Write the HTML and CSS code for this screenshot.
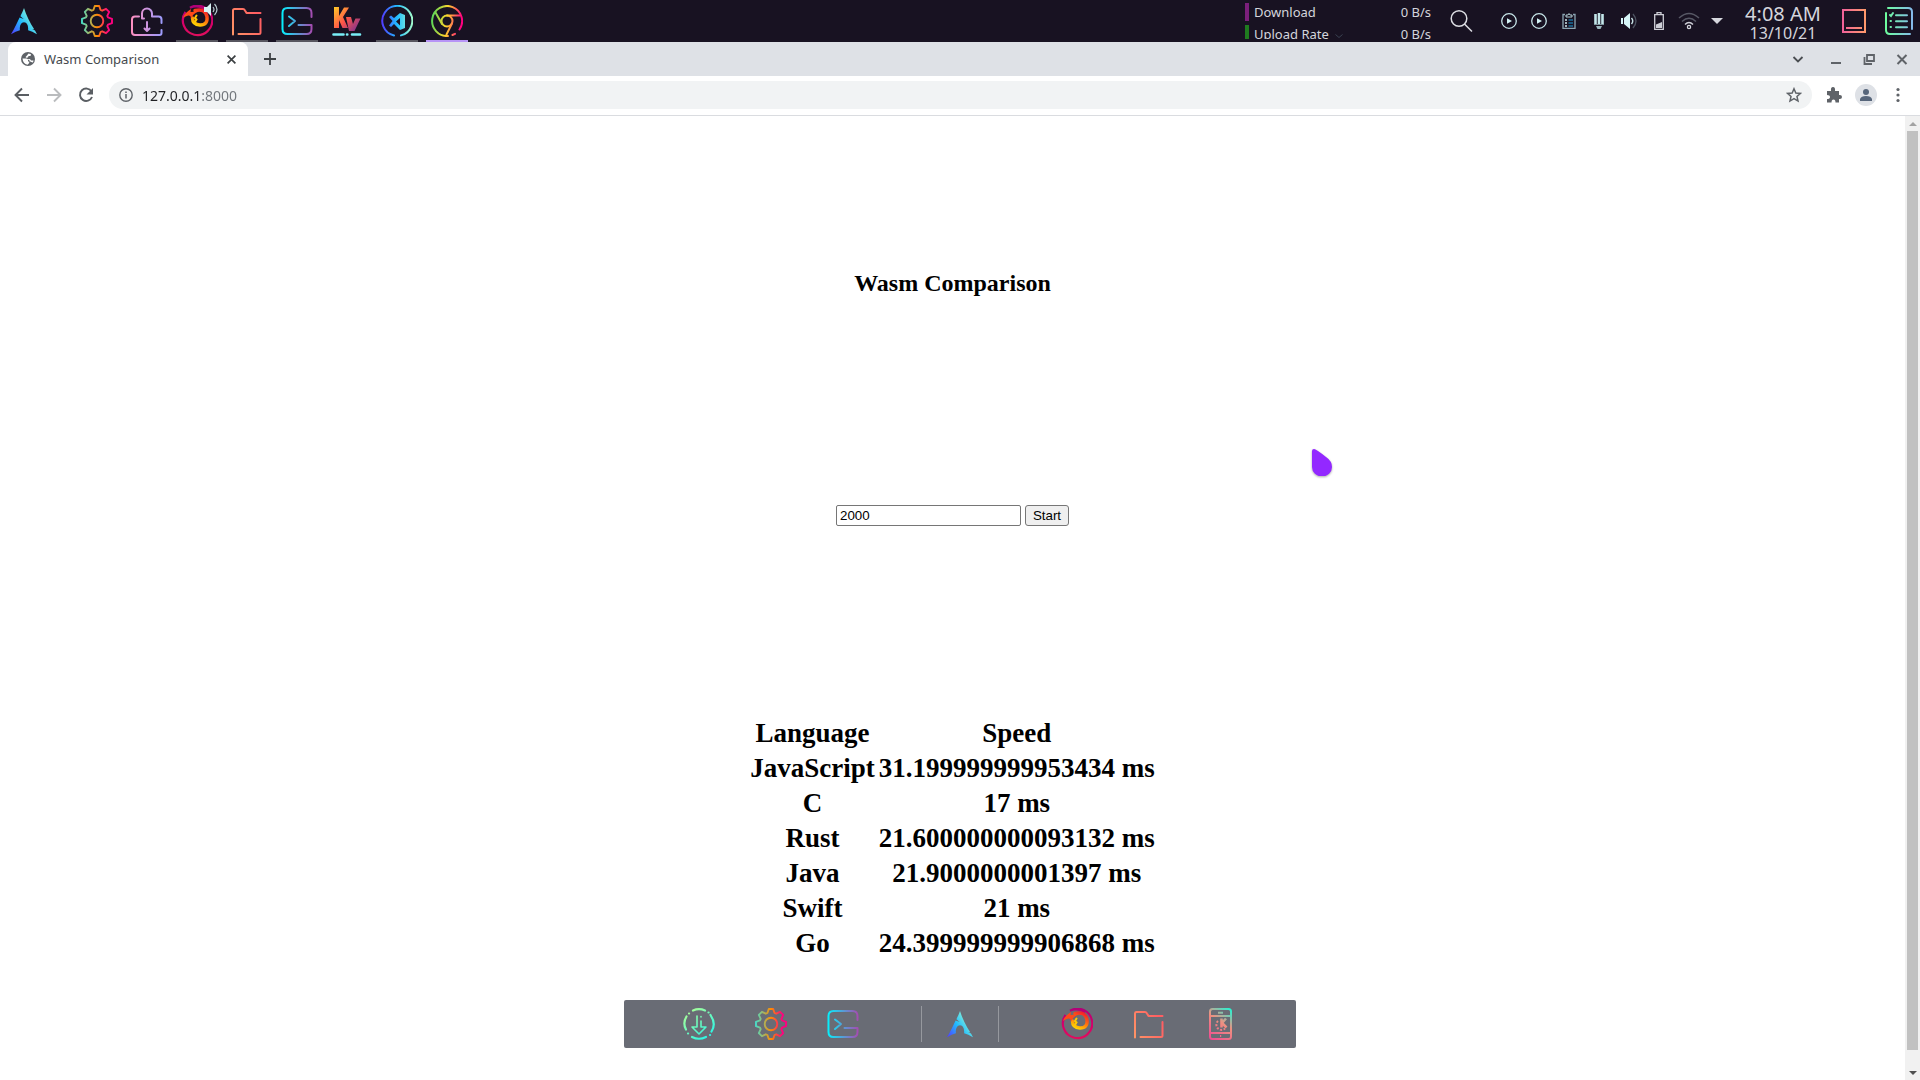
FILE: index.html
```html
<!DOCTYPE html>
<html lang="en">
<head>
<meta charset="utf-8">
<title>Wasm Comparison</title>
<link rel="stylesheet" href="styles.css">
</head>
<body>
<svg class="sprite" aria-hidden="true">
  <defs>
    <linearGradient id="g-arch" x1="3" y1="30" x2="29" y2="12" gradientUnits="userSpaceOnUse"><stop offset="0" stop-color="#5433ff"/><stop offset=".5" stop-color="#20bdff"/><stop offset="1" stop-color="#a5fecb"/></linearGradient>
    <linearGradient id="g-gear" x1="0" y1="16" x2="32" y2="16" gradientUnits="userSpaceOnUse"><stop offset="0" stop-color="#40e0d0"/><stop offset=".5" stop-color="#ff8c00"/><stop offset=".85" stop-color="#ff0080"/></linearGradient>
    <linearGradient id="g-bag" x1="0" y1="16" x2="32" y2="16" gradientUnits="userSpaceOnUse"><stop offset="0" stop-color="#ff8fc0"/><stop offset="1" stop-color="#9a9cff"/></linearGradient>
    <linearGradient id="g-folder" x1="0" y1="32" x2="30" y2="16" gradientUnits="userSpaceOnUse"><stop offset="0" stop-color="#ff9966"/><stop offset="1" stop-color="#ff5e62"/></linearGradient>
    <linearGradient id="g-term" x1="0" y1="16" x2="31" y2="16" gradientUnits="userSpaceOnUse"><stop offset="0" stop-color="#00f5ff"/><stop offset="1" stop-color="#a54bb0"/></linearGradient>
    <linearGradient id="g-kv" x1="4" y1="2" x2="28" y2="24" gradientUnits="userSpaceOnUse"><stop offset="0" stop-color="#ffc628"/><stop offset=".5" stop-color="#ff5548"/><stop offset="1" stop-color="#7b3090"/></linearGradient>
    <linearGradient id="g-code" x1="0" y1="16" x2="32" y2="16" gradientUnits="userSpaceOnUse"><stop offset="0" stop-color="#5433ff"/><stop offset=".5" stop-color="#20bdff"/><stop offset="1" stop-color="#a5fecb"/></linearGradient>
    <linearGradient id="g-chrome" x1="0" y1="12" x2="32" y2="16" gradientUnits="userSpaceOnUse"><stop offset="0" stop-color="#4fd65c"/><stop offset=".5" stop-color="#ffd52a"/><stop offset=".95" stop-color="#ff0080"/></linearGradient>
    <linearGradient id="g-fox" x1="25" y1="4" x2="16" y2="22" gradientUnits="userSpaceOnUse"><stop offset="0" stop-color="#f01030"/><stop offset=".5" stop-color="#ff6a10"/><stop offset="1" stop-color="#ffe000"/></linearGradient>
    <linearGradient id="g-ring" x1="16" y1="0" x2="16" y2="32" gradientUnits="userSpaceOnUse"><stop offset="0" stop-color="#b00078"/><stop offset=".6" stop-color="#d80068"/><stop offset="1" stop-color="#e0105c"/></linearGradient>
    <linearGradient id="g-down" x1="4" y1="4" x2="24" y2="30" gradientUnits="userSpaceOnUse"><stop offset="0" stop-color="#a8ff98"/><stop offset="1" stop-color="#2cf4e4"/></linearGradient>
    <linearGradient id="g-phone" x1="6" y1="30" x2="26" y2="2" gradientUnits="userSpaceOnUse"><stop offset="0" stop-color="#f05090"/><stop offset=".55" stop-color="#ee9080"/><stop offset="1" stop-color="#2cf0d0"/></linearGradient>
    <linearGradient id="g-desk" x1="0" y1="12" x2="24" y2="12" gradientUnits="userSpaceOnUse"><stop offset="0" stop-color="#f0609a"/><stop offset="1" stop-color="#ff9a6a"/></linearGradient>
    <linearGradient id="g-list" x1="0" y1="14" x2="28" y2="14" gradientUnits="userSpaceOnUse"><stop offset="0" stop-color="#6cff9c"/><stop offset="1" stop-color="#86b8ec"/></linearGradient>
  </defs>
  <symbol id="i-arch" viewBox="0 0 32 32"><path fill="url(#g-arch)" d="M16 3c-1.200 3.200-2.100 5.200-3.600 8.200l3.300 2.800-4.100-1.500C9.500 17 7 22.500 3 29.200c3.400-2 6-3.300 8.900-4-.5-5 1.400-8 4.100-8s4.600 3 4.100 8c2.900.7 5.500 2 8.900 4l-2-3.600-2.800-1.500 2 .2C22 17.800 18 9.500 16 3z"/></symbol>
  <symbol id="i-gear" viewBox="0 0 32 32"><g fill="none" stroke="url(#g-gear)" stroke-width="1.900" stroke-linejoin="round"><path d="M12.400 5 13.800 1h4.400l1.400 4 1.600.7 3.850-1.860 3.110 3.110L26.300 10.800l.7 1.600 4 1.400v4.400l-4 1.400-.7 1.600 1.860 3.850-3.110 3.110L21.200 26.300l-1.600.7-1.400 4h-4.400l-1.400-4-1.600-.7-3.850 1.860-3.110-3.110L5.700 21.200 5 19.600l-4-1.400v-4.400l4-1.400.7-1.600-1.860-3.850 3.110-3.110L10.800 5.700z"/><circle cx="16" cy="16" r="6.300"/></g></symbol>
  <symbol id="i-bag" viewBox="0 0 32 32"><g fill="none" stroke="url(#g-bag)" stroke-width="2" stroke-linecap="round" stroke-linejoin="round"><path d="M30.500 18V14.500q0-3-3-3H21V8.500a5 5 0 0 0-10 0v5H13M8 11.500H4q-3 0-3 3V27q0 3 3 3h24.500q2 0 2-2V25M16 17v9M13.500 23.500l2.500 2.500 2.500-2.500"/></g></symbol>
  <symbol id="i-fox" viewBox="0 0 32 32"><path fill="none" stroke="url(#g-ring)" stroke-width="2.200" d="M4.500 7A14.700 14.700 0 1 0 9 2.800Q16-.5 24 4"/><path fill="none" stroke="url(#g-fox)" stroke-width="3.400" stroke-linecap="round" d="M14 5.500Q24 3 26 11.500 27 20 19 20 11.500 19.500 11.500 13"/><path fill="#ff4a18" d="M2 13C3.500 8.500 6 7 10 4L9.500 7 18 6.500C14 8 12 9 10 14 10 9.500 7 9.500 2 13z"/><path fill="none" stroke="#ffc800" stroke-width="2" stroke-linecap="round" d="M15.500 10.500 14 13l1.500 1.500L14 17"/></symbol>
  <symbol id="i-folder" viewBox="0 0 32 32"><path fill="none" stroke="url(#g-folder)" stroke-width="2" stroke-linecap="round" stroke-linejoin="round" d="M2 29.500V5.500q0-1.500 1.500-1.500H12q1.200 0 2 1.500l1.500 2.500H29.500M29.500 14V27.500q0 1.500-1.500 1.500H7.500"/></symbol>
  <symbol id="i-term" viewBox="0 0 32 32"><g fill="none" stroke="url(#g-term)" stroke-width="2" stroke-linecap="round" stroke-linejoin="round"><path d="M30.500 12V8q0-5-5-5H6.500q-5 0-5 5v16q0 5 5 5h19q5 0 5-5v-4H17.500M8 11.500l6 4.500-6 5"/></g></symbol>
  <symbol id="i-kv" viewBox="0 0 32 32"><path fill="url(#g-kv)" d="M3 2h5v9l5-8.500h5L12 12l5 11h-5.500l-3.500-8v8H3zM15 12h5l2 7 2.500-5.500h5L23.500 26H18z"/><path stroke="#79eef8" stroke-width="2.600" stroke-linecap="round" d="M2.500 29.500h10M16 29.500h.3M21 29.500h8"/></symbol>
  <symbol id="i-code" viewBox="0 0 32 32"><path fill="none" stroke="url(#g-code)" stroke-width="2" stroke-linecap="round" d="M13 30.500A15 15 0 1 1 20 30.400"/><path fill="url(#g-code)" fill-rule="evenodd" d="M19 8l5 2v13l-5 2-6-6-3 3-2-1.500 3.500-4.500L8 12l2-1.500 3 2.500zM19 13l-4 3.500 4 4z"/></symbol>
  <symbol id="i-chrome" viewBox="0 0 32 32"><g fill="none" stroke="url(#g-chrome)" stroke-width="2" stroke-linecap="round"><path d="M17 31A15 15 0 1 1 28.500 24.500M24 28.800 21.500 30"/><circle cx="16" cy="16" r="5.500"/><path d="M16 10.500H29M11 19 4.500 7.500M21 18.500 15.500 29.500"/></g></symbol>
  <symbol id="i-down" viewBox="0 0 32 32"><g fill="none" stroke="url(#g-down)" stroke-linejoin="round" stroke-linecap="round"><path stroke-width="2.200" d="M10 2.500Q16-.2 22 2.500M27.500 7Q33.500 16 28.500 23.500M23 29Q16 32.500 9 29M3 21.500Q-.5 15 3.500 8.500M6 5.500h.1M25.500 4.500h.1M27 27h.1M5 25.500h.1"/><path stroke-width="1.600" d="M14 8v11H9l7 7 7-7h-5V13M18 8.500v.5"/></g></symbol>
  <symbol id="i-phone" viewBox="0 0 32 32"><g fill="none" stroke="url(#g-phone)" stroke-width="2"><rect x="5" y="1" width="21" height="30" rx="2.500"/><path d="M5 8h21M5 25h21M13 4.800h5M15 28h1.200"/><path stroke-width="2.600" d="M16.500 10.500v9M21 10.500l-4 4.500 4.500 4.500"/><path stroke-width="2" stroke-dasharray="2 1.500" d="M13 13a5 5 0 1 0 7 7.500"/></g></symbol>
  <symbol id="i-play" viewBox="0 0 16 16"><circle cx="8" cy="8" r="7.300" fill="none" stroke="#c8e6ea" stroke-width="1.300"/><path d="M6 5.200 11 8l-5 2.800z" fill="#d4f3f6"/></symbol>
</svg>

<div class="screen">
  <header class="panel">
    <nav class="launchers" aria-label="Applications">
      <button class="task home" aria-label="Menu"><svg><use href="#i-arch"/></svg></button>
      <button class="task" aria-label="Settings"><svg><use href="#i-gear"/></svg></button>
      <button class="task" aria-label="Software"><svg><use href="#i-bag"/></svg></button>
      <button class="task open" aria-label="Firefox"><svg><use href="#i-fox"/></svg>
        <svg class="badge" viewBox="0 0 14 14"><path d="M0 4h3l4-4v13L3 9H0z" fill="#d6f2f5"/><path d="M9 4q2 2.500 0 5M10.500 1q5 5.500 0 11" fill="none" stroke="#b7ccd2" stroke-width="1.200"/></svg></button>
      <button class="task open" aria-label="Files"><svg><use href="#i-folder"/></svg></button>
      <button class="task open" aria-label="Terminal"><svg><use href="#i-term"/></svg></button>
      <button class="task" aria-label="Kvantum"><svg><use href="#i-kv"/></svg></button>
      <button class="task open" aria-label="Code"><svg><use href="#i-code"/></svg></button>
      <button class="task open active" aria-label="Chrome"><svg><use href="#i-chrome"/></svg></button>
    </nav>
    <div class="status">
      <dl class="net">
        <div class="rate down"><dt>Download</dt><dd>0 B/s</dd></div>
        <div class="rate up"><dt>Upload Rate <svg viewBox="0 0 8 4"><path d="M.5.5 4 3.500 7.500.5" fill="none" stroke="#3a4252"/></svg></dt><dd>0 B/s</dd></div>
      </dl>
      <button class="search" aria-label="Search"><svg viewBox="0 0 24 24" fill="none" stroke="#dcdde3" stroke-width="1.500"><circle cx="9" cy="9.500" r="7.800"/><path d="M14.500 15 22 22.500"/></svg></button>
      <div class="tray">
        <button aria-label="Player"><svg><use href="#i-play"/></svg></button>
        <button aria-label="Player two"><svg><use href="#i-play"/></svg></button>
        <button aria-label="Clipboard"><svg viewBox="0 0 16 16"><path d="M4 1.500H2v14h12v-14h-2" fill="none" stroke="#8aa5b3" stroke-width="1.300"/><path d="M5 4V2h2l1-1.500L9 2h2v2z" fill="none" stroke="#b3d0d6"/><path d="M4 7h2M4 10h2M4 13h2" stroke="#cfe9ec" stroke-width="1.600"/><path d="M7.500 7H12M7.500 10H12M7.500 13H12" stroke="#1b6f9c" stroke-width="1.600"/></svg></button>
        <button aria-label="Microphone"><svg viewBox="0 0 16 16"><path d="M4.500 1v10M8 0v11M11.500 1v10" stroke="#c3e6ea" stroke-width="2.600"/><path d="M3 11.500h10" stroke="#7a949c"/><path d="M5 13h6l-1.500 3h-3z" fill="#9db9c0"/></svg></button>
        <button aria-label="Volume"><svg viewBox="0 0 16 16"><path d="M0 5h2v6H0zM3 5l6-5v16l-6-5z" fill="#d6f5f8"/><path d="M10.500 5q2.500 3 0 6" fill="none" stroke="#c5e0e4" stroke-width="1.400"/><path d="M12 1q6 7 0 14" fill="none" stroke="#4c5260" stroke-width="1.300"/></svg></button>
        <button aria-label="Battery"><svg class="battery" viewBox="0 0 12 18"><path d="M1.700 2.700h8.600v14.600H1.700zM4 2.500V.7h4v1.800" fill="none" stroke="#cdced6" stroke-width="1.300"/><path d="M3 12.500 9 10v6H3z" fill="#cdced6"/></svg></button>
        <button aria-label="Network"><svg class="wifi" viewBox="0 0 22 18" fill="none"><path d="M1 6Q11-3 21 6M4 9.500Q11 3 18 9.500" stroke="#575865" stroke-width="1.500"/><path d="M7 12.500q4-4 8 0" stroke="#cdced6" stroke-width="1.500"/><circle cx="11" cy="15" r="1.600" stroke="#d6d7de" stroke-width="1.300"/></svg></button>
        <button class="caret" aria-label="More"><svg viewBox="0 0 12 6"><path d="M0 0h12L6 6z" fill="#d6d7de"/></svg></button>
      </div>
      <div class="clock"><time class="hour">4:08 AM</time><time class="date">13/10/21</time></div>
      <button class="desk" aria-label="Show desktop"><svg viewBox="0 0 24 24"><path d="M1 1h22v22H1z" fill="none" stroke="url(#g-desk)" stroke-width="2"/><path d="M4 18h16v2H4z" fill="url(#g-desk)"/></svg></button>
      <button class="notes" aria-label="Notes"><svg viewBox="0 0 28 28"><g fill="none" stroke="url(#g-list)" stroke-width="2" stroke-linecap="round"><path d="M3 1.100H23q4 0 4 4V22M1 6V23q0 4 4 4H25M11 8.200H22M11 14.200H22M11 20.200H22M5 8l1 1 2-3M5.500 14h.5M5.500 20h.5"/></g></svg></button>
    </div>
  </header>

  <div class="tabs">
    <div class="tab">
      <svg class="globe" viewBox="0 0 14 14"><circle cx="7" cy="7" r="7" fill="#5f6368"/><path d="M1.500 6.500H5q2 0 2 1.500v1.500h1.500Q8.500 11.500 6.500 12.800 2 12 1.500 6.500zM7.500 1.500 10 2.200 9.500 4H7.500L7 5.500H5.500L6 7H8.500q1 0 1.500 1.500h2.500q0 1-.8 2Q9 10 8.500 8.500L6 6.800 4.500 5 6 3.500z" fill="#fff"/></svg>
      <span class="tab-title">Wasm Comparison</span>
      <button class="tab-close" aria-label="Close tab"><svg viewBox="0 0 8 8"><path d="M.5.5l7 7m0-7-7 7" stroke="#3c4043" stroke-width="1.500"/></svg></button>
    </div>
    <button class="new-tab" aria-label="New tab"><svg viewBox="0 0 12 12"><path d="M6 0v12M0 6h12" stroke="#3c4043" stroke-width="1.800"/></svg></button>
    <div class="window-controls">
      <button aria-label="Search tabs"><svg viewBox="0 0 12 12"><path d="M1.500 4 6 8.500 10.500 4" fill="none" stroke="#4a4d51" stroke-width="1.800"/></svg></button>
      <button aria-label="Minimize"><svg viewBox="0 0 12 12"><path d="M1 10h10" stroke="#5f6368" stroke-width="2"/></svg></button>
      <button aria-label="Restore"><svg viewBox="0 0 12 12" fill="none" stroke="#5f6368" stroke-width="1.800"><path d="M4 2h7v6H4zM1.500 4v7H9"/></svg></button>
      <button aria-label="Close"><svg viewBox="0 0 12 12"><path d="M1.500 2l9 9m0-9-9 9" stroke="#5f6368" stroke-width="2"/></svg></button>
    </div>
  </div>

  <div class="toolbar">
    <button aria-label="Back"><svg viewBox="0 0 16 16" fill="none" stroke="#5a5e63" stroke-width="1.900"><path d="M15 8H2.500M8 1.500 1.500 8 8 14.500"/></svg></button>
    <button aria-label="Forward"><svg viewBox="0 0 16 16" fill="none" stroke="#babcbe" stroke-width="1.900"><path d="M1 8h12.500M8 1.500 14.500 8 8 14.500"/></svg></button>
    <button aria-label="Reload"><svg viewBox="0 0 16 16"><path d="M13.500 4.500A6.200 6.200 0 1 0 14 10" fill="none" stroke="#5a5e63" stroke-width="1.900"/><path d="M15 1v6.500H8.500z" fill="#5a5e63"/></svg></button>
    <div class="address">
      <svg viewBox="0 0 14 14"><circle cx="7" cy="7" r="6.200" fill="none" stroke="#5f6368" stroke-width="1.400"/><path d="M7 6v4.500M7 3.500V5" stroke="#5f6368" stroke-width="1.500"/></svg>
      <input class="url" type="text" value="127.0.0.1:8000" aria-label="Address">
      <button class="star" aria-label="Bookmark"><svg viewBox="0 0 14 14"><path d="M7 1.500 8.600 5.200l4 .4-3 2.700.9 4L7 10.200l-3.500 2.100.9-4-3-2.700 4-.4z" fill="none" stroke="#5f6368" stroke-width="1.300"/></svg></button>
    </div>
    <div class="actions">
      <button aria-label="Extensions"><svg viewBox="0 0 16 16"><path d="M1 4h4q-.5-4 2-4t2 4h4v4q3-.5 3 2t-3 2v3.500H9.500q0-3-2-3t-2 3H1V12q3 0 3-2T1 8z" fill="#5f6368"/></svg></button>
      <button class="profile" aria-label="Profile"><svg viewBox="0 0 14 14"><circle cx="7" cy="4" r="3" fill="#56657a"/><path d="M1 13v-2q1-3 6-3t6 3v2z" fill="#56657a"/></svg></button>
      <button aria-label="Menu"><svg viewBox="0 0 16 16" fill="#5f6368"><circle cx="8" cy="2.500" r="1.600"/><circle cx="8" cy="8" r="1.600"/><circle cx="8" cy="13.500" r="1.600"/></svg></button>
    </div>
  </div>

  <div class="viewport">
    <main class="page">
      <h1>Wasm Comparison</h1>
      <form class="run" onsubmit="return false"><input type="text" value="2000" aria-label="Iterations"><button>Start</button></form>
      <table>
        <thead><tr><th scope="col">Language</th><th scope="col">Speed</th></tr></thead>
        <tbody>
          <tr><th scope="row">JavaScript</th><td>31.199999999953434 ms</td></tr>
          <tr><th scope="row">C</th><td>17 ms</td></tr>
          <tr><th scope="row">Rust</th><td>21.600000000093132 ms</td></tr>
          <tr><th scope="row">Java</th><td>21.9000000001397 ms</td></tr>
          <tr><th scope="row">Swift</th><td>21 ms</td></tr>
          <tr><th scope="row">Go</th><td>24.399999999906868 ms</td></tr>
        </tbody>
      </table>
    </main>
    <div class="scrollbar" aria-hidden="true">
      <svg viewBox="0 0 8 4"><path d="M0 4h8L4 0z" fill="#a3a3a3"/></svg>
      <div class="thumb"></div>
      <svg viewBox="0 0 8 4"><path d="M0 0h8L4 4z" fill="#505050"/></svg>
    </div>
  </div>
</div>

<nav class="dock" aria-label="Dock">
  <div class="group">
    <button aria-label="Downloads"><svg><use href="#i-down"/></svg></button>
    <button aria-label="System settings"><svg><use href="#i-gear"/></svg></button>
    <button aria-label="Console"><svg><use href="#i-term"/></svg></button>
  </div>
  <div class="middle"><button aria-label="Start menu"><svg><use href="#i-arch"/></svg></button></div>
  <div class="group">
    <button aria-label="Web browser"><svg><use href="#i-fox"/></svg></button>
    <button aria-label="File manager"><svg><use href="#i-folder"/></svg></button>
    <button aria-label="Phone"><svg><use href="#i-phone"/></svg></button>
  </div>
</nav>
<svg class="pointer" viewBox="0 0 20 27" aria-hidden="true"><path d="M0 2Q0 0 2 0 4 0 14 8 20 12 20 18A10 9.500 0 0 1 0 18z" fill="#9328ff"/></svg>
</body>
</html>
```
FILE: styles.css
```css
* { box-sizing: border-box; }
body { margin: 0; background: #fff; overflow: hidden; font-family: "Noto Sans", sans-serif; }
svg { display: block; }
.sprite { position: absolute; width: 0; height: 0; }
.panel button, .tabs button, .toolbar button, .dock button {
  display: flex; align-items: center; justify-content: center;
  flex: none; border: 0; padding: 0; background: none;
}
.screen { display: flex; flex-direction: column; height: 100vh; }

/* Desktop panel */
.panel { display: flex; justify-content: space-between; height: 42px; background: #181222; color: #d4d5dc; }
.launchers { display: flex; gap: 8px; padding-left: 3px; }
.task { position: relative; width: 42px; height: 42px; }
.panel .home { margin-right: 23px; }
.task svg { width: 32px; height: 32px; }
.panel .open { border-bottom: 2px solid #57565f; padding-top: 2px; }
.panel .active { border-color: #b794f6; }
.task .badge { position: absolute; top: 3px; right: 0; width: 14px; height: 14px; }
.status { display: flex; align-items: center; padding-right: 7px; }
.net { width: 187px; height: 39px; margin: 0 18px 0 0; padding-top: 3px; overflow: hidden; align-self: start; font-size: 13px; line-height: 18px; }
.rate { display: flex; justify-content: space-between; margin-bottom: 4px; padding: 0 1px 0 5px; border-left: 4px solid #7b1f7b; }
.up { border-color: #1f7b1f; }
.rate dt { display: flex; align-items: center; gap: 6px; }
.rate svg { width: 8px; height: 4px; margin-top: 4px; }
.rate dd { margin: 0; }
.panel .search { margin-right: 24px; }
.search svg { width: 24px; height: 24px; }
.tray { display: flex; gap: 8px; margin-right: 19px; }
.tray button { width: 22px; height: 42px; }
.tray svg { width: 16px; height: 16px; }
.tray .battery { width: 12px; height: 18px; }
.tray .wifi { width: 22px; height: 18px; }
.tray .caret { width: 18px; }
.tray .caret svg { width: 12px; height: 6px; }
.clock { display: flex; flex-direction: column; align-items: center; width: 76px; margin-right: 21px; padding-top: 1px; }
.hour { font-size: 20px; line-height: 22px; }
.date { font-size: 16px; line-height: 16px; }
.panel .desk { margin-right: 19px; }
.desk svg { width: 24px; height: 24px; }
.notes svg { width: 28px; height: 28px; }

/* Browser chrome */
.tabs { display: flex; align-items: center; height: 34px; padding: 0 12px 0 8px; background: #dee1e6; }
.tab { display: flex; align-items: center; width: 240px; height: 34px; padding: 0 10px 0 13px; background: #fff; border-radius: 8px 8px 0 0; }
.globe { width: 14px; height: 14px; margin-right: 9px; }
.tab-title { flex: 1; font-size: 13px; line-height: 18px; color: #45494d; }
.tab-close svg { width: 9px; height: 9px; }
.tab-close { width: 14px; }
.new-tab { width: 44px; height: 34px; }
.new-tab svg { width: 12px; height: 12px; }
.window-controls { display: flex; gap: 21px; margin-left: auto; }
.window-controls svg { width: 12px; height: 12px; }
.window-controls button:first-child { margin-right: 5px; }
.toolbar { display: flex; align-items: center; height: 40px; padding: 0 14px 1px; border-bottom: 1px solid #dadce0; background: #fff; }
.toolbar > button { margin-right: 16px; }
.toolbar svg { width: 16px; height: 16px; }
.address { display: flex; align-items: center; flex: 1; height: 28px; margin-right: 14px; padding: 0 10px; border-radius: 14px; background: #f1f3f4; }
.toolbar > .address { margin-left: -1px; }
.address svg { width: 14px; height: 14px; }
.address .star svg { width: 16px; height: 16px; }
.url {
  flex: 1; height: 28px; border: 0; padding: 0 9px; font: 14px/20px "Noto Sans", sans-serif;
  color: transparent; background: linear-gradient(to right, #202124 69px, #70757a 69px); -webkit-background-clip: text; background-clip: text;
}
.actions { display: flex; align-items: center; gap: 13px; }
.actions .profile { width: 22px; height: 22px; border-radius: 50%; background: #dee1e6; }
.profile svg { width: 14px; height: 14px; }

/* Comparison page */
.viewport { display: flex; flex: 1; min-height: 0; }
.page { display: flex; flex: 1; flex-direction: column; align-items: center; padding-top: 153px; color: #000; font-family: "Liberation Serif", serif; overflow: hidden; }
h1 { margin: 0 0 208px; font-size: 24px; line-height: 28px; }
.run { display: flex; gap: 4px; margin-bottom: 189px; }
.run input { width: 185px; height: 21px; border: 1px solid #767676; border-radius: 2px; padding: 1px 3px; font-family: "Liberation Sans", sans-serif; }
.run button { width: 44px; height: 21px; border: 1px solid #767676; border-radius: 3px; padding: 0; background: #efefef; color: #000; font-family: "Liberation Sans", sans-serif; }
table { border-spacing: 2px; font-size: 27px; line-height: 31px; font-weight: 700; text-align: center; }
th, td { padding: 1px; }
.scrollbar { display: flex; flex-direction: column; align-items: center; gap: 5px; width: 15px; padding: 6px 0 5px; background: #f1f1f1; }
.scrollbar svg { width: 8px; height: 4px; }
.thumb { flex: 1; width: 11px; margin-bottom: 16px; background: #c1c1c1; }

/* Floating dock and mouse pointer */
.dock { position: fixed; bottom: 32px; left: 50%; transform: translateX(-50%); display: flex; align-items: center; gap: 62px; height: 48px; padding: 0 59px; border-radius: 2px; background: #696c75; }
.group { display: flex; gap: 40px; }
.dock svg { width: 32px; height: 32px; }
.middle { padding: 2px 22px; border: solid #96989e; border-width: 0 1px; }
.pointer { position: absolute; left: 1312px; top: 449px; width: 20px; height: 27px; filter: drop-shadow(0 1px 1px #0005); }
```
